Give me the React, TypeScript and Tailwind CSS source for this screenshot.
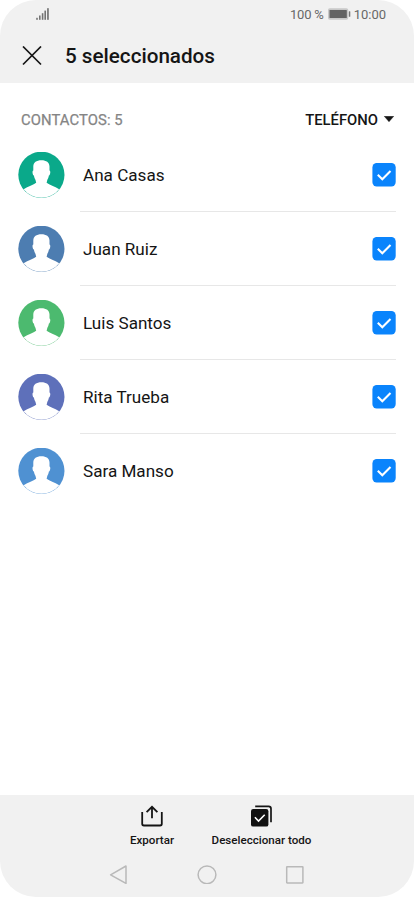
import React from "react";

const contacts = [
  { name: "Ana Casas", color: "#0aa98a" },
  { name: "Juan Ruiz", color: "#4d7db1" },
  { name: "Luis Santos", color: "#4cba6f" },
  { name: "Rita Trueba", color: "#5e70ba" },
  { name: "Sara Manso", color: "#4f91d2" },
];

function Avatar({ color }: { color: string }) {
  return (
    <svg className="ml-[18px] size-[47px] shrink-0" viewBox="0 0 47 47">
      <circle cx="23.4" cy="22.8" r="23.1" fill={color} />
      <path
        fill="#fff"
        d="M23.4 8.2C18.4 8.2 15.4 10.4 15.3 14.4V18.4C14 18.6 14.4 23 15.9 23.6C16.3 25.8 16.9 27 17.5 28L18.2 30.8C15.4 32.6 10.2 34.6 5.6 37.2A22.7 22.7 0 0 0 41.2 37.2C36.6 34.6 31.4 32.6 28.6 30.8L29.3 28C29.9 27 30.5 25.8 30.9 23.6C32.4 23 32.8 18.6 31.5 18.4V14.4C31.4 10.4 28.4 8.2 23.4 8.2Z"
      />
    </svg>
  );
}

function Checkbox() {
  return (
    <svg className="mr-[18px] ml-auto size-6 shrink-0" viewBox="0 0 24 24" fill="none">
      <rect x="0.4" y="0.1" width="23.3" height="23.3" rx="4.3" fill="#0a84fc" />
      <path d="M5.8 11.8L10.3 16.2L18.5 8.1" stroke="#fff" strokeWidth="2.1" />
    </svg>
  );
}

export default function App() {
  return (
    <div className="flex h-[897px] w-[414px] flex-col overflow-hidden rounded-[36px] bg-white font-['Roboto',sans-serif] text-[#151515]">
      <header className="h-[83px] shrink-0 bg-[#f1f1f1]">
        <div className="flex h-7 items-center pr-7 pl-9 text-[13px] leading-none text-[#686868]">
          <svg className="h-3 w-[14px]" viewBox="0 0 14 12" fill="#747474">
            <rect x="0.2" y="9.8" width="1.6" height="2" />
            <rect x="3" y="7.5" width="1.6" height="4.3" />
            <rect x="5.8" y="5.2" width="1.6" height="6.6" />
            <rect x="8.4" y="2.6" width="1.6" height="9.2" />
            <rect x="11.1" y="0.2" width="1.7" height="11.6" />
          </svg>
          <span className="ml-auto tracking-[-0.2px]">100 %</span>
          <svg className="mr-[3px] ml-1 h-3 w-[23px]" viewBox="0 0 23 12">
            <rect x="0" y="0.3" width="20.2" height="11.4" rx="1.8" fill="#c8c8c8" />
            <rect x="1.5" y="1.9" width="17.3" height="8.2" rx="0.6" fill="#636363" />
            <rect x="20.8" y="3.2" width="1.5" height="5.6" rx="0.5" fill="#777" />
          </svg>
          <span>10:00</span>
        </div>
        <div className="flex h-[55px] items-center pl-[22px]">
          <svg className="size-5" viewBox="0 0 20 20" fill="none">
            <path d="M1 0.5L19 18.5M19 0.5L1 18.5" stroke="#151515" strokeWidth="1.7" />
          </svg>
          <h1 className="ml-[23px] pt-[2px] text-[20.65px] leading-none font-medium">5 seleccionados</h1>
        </div>
      </header>

      <main className="flex-1">
        <div className="flex h-[55px] items-center pt-[18px] pr-[19px] pl-[21px] text-[14.8px] leading-[15px]">
          <span className="pt-[2px] tracking-[0.1px] text-[#858585] [-webkit-text-stroke:0.25px_#858585]">CONTACTOS: 5</span>
          <span className="ml-auto pt-[2px] font-medium">TELÉFONO</span>
          <svg className="ml-[5px] h-[7px] w-3" viewBox="0 0 12 7">
            <path d="M1.2 0.2H10.8L6 5.8Z" fill="#151515" stroke="#151515" strokeWidth="0.4" strokeLinejoin="round" />
          </svg>
        </div>
        <ul>
          {contacts.map((c, i) => (
            <li key={c.name} className="flex h-[74px] flex-col">
              <div className="flex h-[73px] items-center pt-px">
                <Avatar color={c.color} />
                <span className="ml-[18px] pt-[2px] text-[17.1px] leading-none">{c.name}</span>
                <Checkbox />
              </div>
              {i < contacts.length - 1 && <div className="mr-[18px] ml-20 h-px bg-[#e7e7e7]" />}
            </li>
          ))}
        </ul>
      </main>

      <footer className="h-[102px] shrink-0 bg-[#f1f1f1]">
        <div className="flex h-[58px] text-[11.6px] leading-none font-medium">
          <div className="ml-[97px] flex w-[110px] flex-col items-center pt-[10px]">
            <svg className="h-[23px] w-[22px]" viewBox="0 0 22 23" fill="none" stroke="#151515" strokeWidth="1.8">
              <path d="M1.2 7V18.8Q1.2 20.5 2.9 20.5H19.1Q20.8 20.5 20.8 18.8V7" />
              <path d="M11 13.3V2M5.6 7.2L11 1.8L16.4 7.2" />
            </svg>
            <span className="mt-[7px] whitespace-nowrap">Exportar</span>
          </div>
          <div className="flex w-[109px] flex-col items-center pt-[10px]">
            <svg className="h-[23px] w-[22px]" viewBox="0 0 22 23" fill="none">
              <rect x="0" y="4" width="17.4" height="17.6" rx="2.2" fill="#111" />
              <path d="M3.9 12.3L7.5 16L13.7 9.8" stroke="#fff" strokeWidth="1.6" />
              <path d="M4.2 1.4H17.6Q20 1.4 20 3.8V17.3" stroke="#151515" strokeWidth="1.7" />
            </svg>
            <span className="mt-[7px] whitespace-nowrap">Deseleccionar todo</span>
          </div>
        </div>
        <div className="flex h-11 items-start pt-[11px] pl-[108px]">
          <svg className="h-5 w-[196px]" viewBox="0 0 196 20" fill="none" stroke="#b9b9b9" strokeWidth="1.5" strokeLinejoin="round">
            <path d="M2.6 10.8L18 2V19.4Z" />
            <circle cx="99" cy="10.8" r="8.9" />
            <rect x="178.7" y="2.7" width="16.2" height="16.2" rx="0.4" />
          </svg>
        </div>
      </footer>
    </div>
  );
}
